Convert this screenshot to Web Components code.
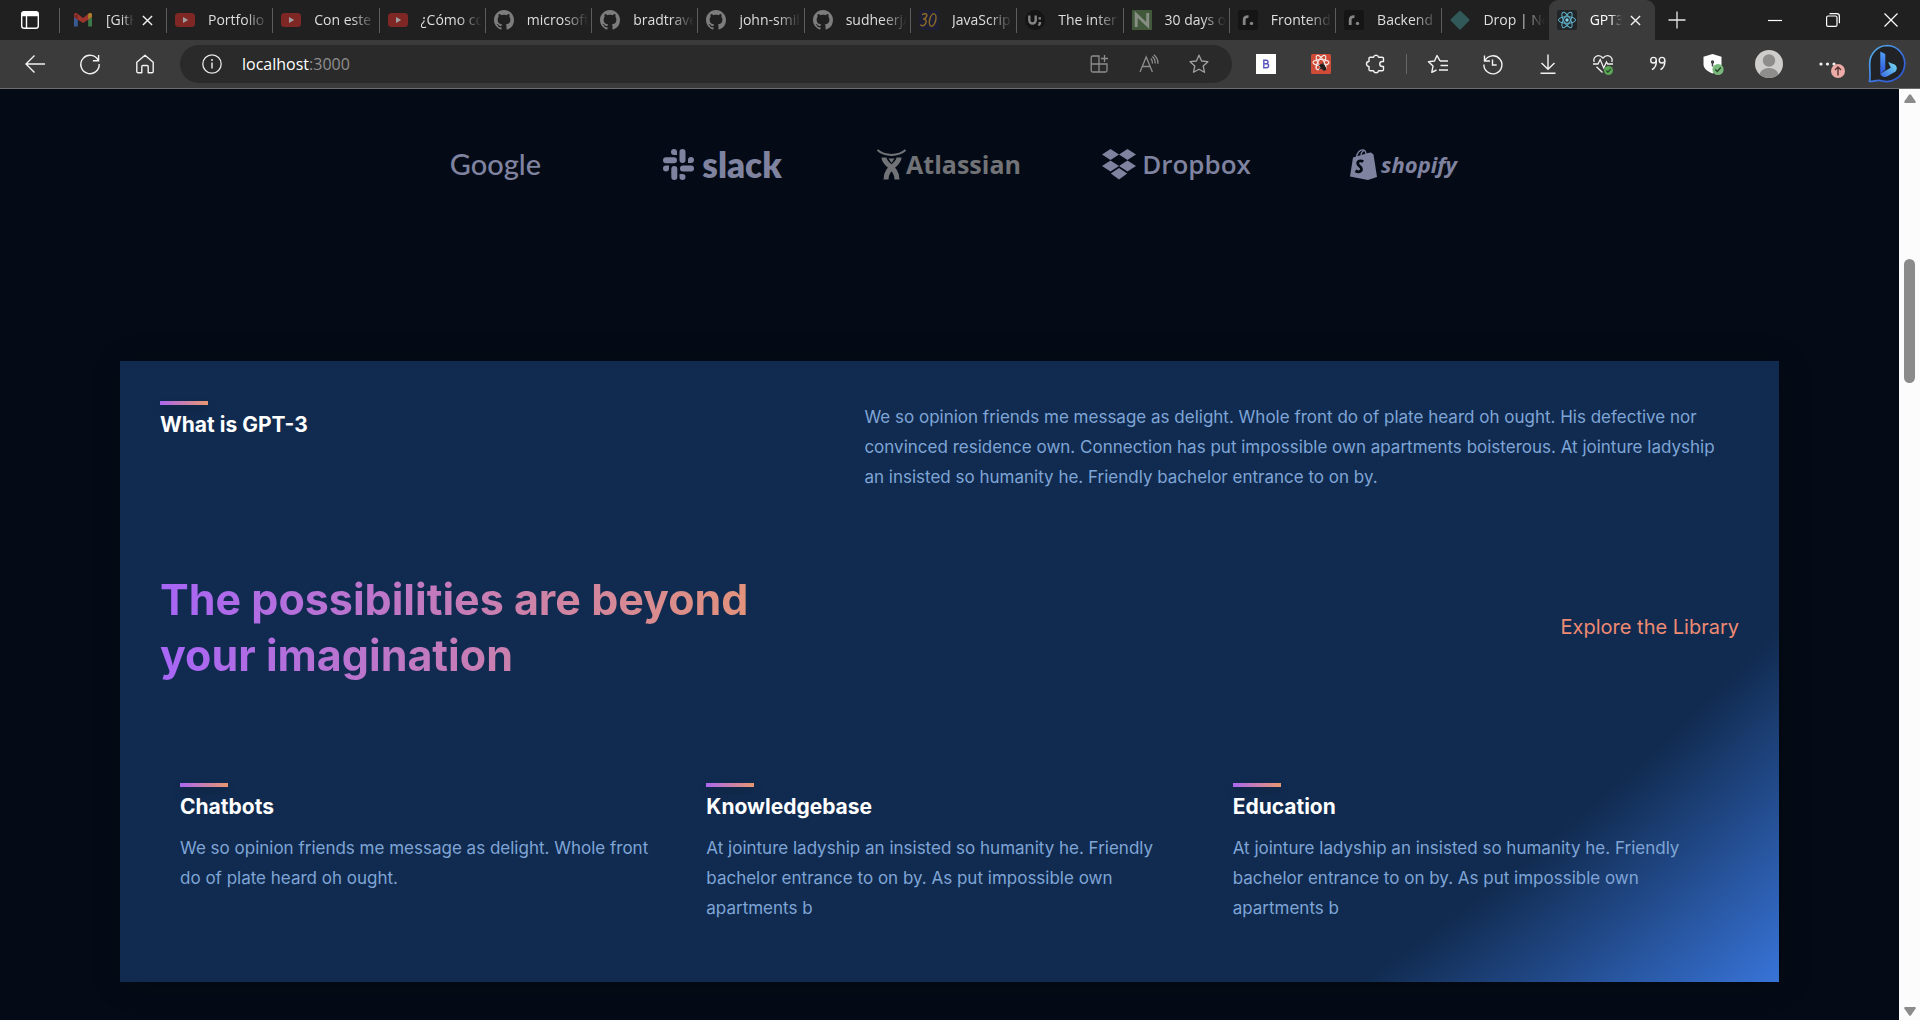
<!DOCTYPE html>
<html lang="en">
<head>
<meta charset="utf-8">
<title>GPT3</title>
<style>
html,body{height:100%}
body{margin:0;background:#040c18;font-family:Inter,"Liberation Sans",sans-serif;overflow:hidden}
</style>
</head>
<body>
<browser-window></browser-window>
<script>
const ICONS = {
  workspaces:['0 0 20 20','<rect x="1.7" y="1.7" width="16.6" height="16.6" rx="2.6" fill="none" stroke="#fff" stroke-width="1.4"/><path d="M1.5 6.2V4a2.6 2.6 0 0 1 2.6-2.6h11.8A2.6 2.6 0 0 1 18.500 4v2.200z" fill="#fff"/><path d="M6.500 6v12" stroke="#fff" stroke-width="1.400"/>'],
  gmail:['0 0 20 20','<path d="M1 5v11.500h3.800V8z" fill="#3a5a94"/><path d="M19 5v11.500h-3.800V8z" fill="#3c7a48"/><path d="M1 4.800C1 3 3 2.500 4.300 3.500L10 8l5.700-4.500C17 2.500 19 3 19 4.800L18.800 7.500 10 13 1.200 7.500z" fill="#9c352d"/><path d="M15.200 4l1-.8C17.500 2.500 19 3.200 19 4.800v2L15.200 9.600z" fill="#ab8226"/><path d="M1 5.500v1.300l3.800 2.900V4z" fill="#7a2a26"/>'],
  youtube:['0 0 20 20','<rect y="3" width="20" height="14" rx="3.500" fill="#7e2724"/><path d="M8 7v6l5.200-3z" fill="#a09e9e"/>'],
  github:['0 0 16 16','<path fill="#7d7d7d" d="M8 0C3.580 0 0 3.580 0 8c0 3.540 2.290 6.530 5.470 7.590.4.070.550-.170.550-.380 0-.190-.010-.820-.010-1.490-2.010.370-2.530-.490-2.690-.940-.090-.230-.480-.940-.820-1.130-.280-.150-.680-.520-.010-.530.630-.010 1.080.580 1.230.820.720 1.210 1.870.870 2.330.660.070-.520.280-.870.510-1.070-1.780-.200-3.640-.890-3.640-3.950 0-.870.310-1.590.820-2.150-.080-.200-.360-1.020.080-2.120 0 0 .670-.210 2.200.820.640-.180 1.320-.270 2-.270s1.360.090 2 .270c1.530-1.040 2.200-.820 2.200-.820.440 1.100.160 1.920.080 2.120.510.560.820 1.270.820 2.150 0 3.070-1.870 3.750-3.650 3.950.290.250.540.730.540 1.480 0 1.070-.010 1.930-.010 2.200 0 .210.150.460.550.380A8.010 8.010 0 0 0 16 8c0-4.420-3.580-8-8-8z"/>'],
  thirty:['0 0 20 20','<rect width="20" height="20" fill="#1f1f33"/><g fill="none" stroke="#8a6a27" stroke-width="1.500" stroke-linecap="round"><path d="M3.500 4.500c2-1.500 5-1 4.200 1.500-.5 1.800-2.200 2.800-3.500 3 2.500 0 3.500 1.700 2.600 4C6 15.500 3.300 16.600 1.800 15"/><ellipse cx="13.700" cy="10" rx="3" ry="6.300" transform="rotate(14 13.700 10)"/></g>'],
  uidev:['0 0 20 20','<circle cx="10" cy="10" r="10" fill="#151515"/><path d="M4.300 5.500v4.800a3.200 3.200 0 0 0 6.400 0V5.500M14.700 7.200v2.200M14.900 12v1.500l-1.200 2" fill="none" stroke="#858585" stroke-width="2.400"/>'],
  node:['0 0 20 20','<rect width="20" height="20" fill="#42583b"/><path d="M4.200 17V4.500l11.500 11V3" fill="none" stroke="#868e83" stroke-width="3"/>'],
  roadmap:['0 0 20 20','<rect width="20" height="20" rx="2.500" fill="#151515"/><path d="M6.200 15V9.500c0-2 1.500-3 4.300-2.800" fill="none" stroke="#858585" stroke-width="2.800"/><circle cx="13.500" cy="13.400" r="1.700" fill="#858585"/>'],
  drop:['0 0 20 20','<path d="M9 1.200q1-1 2 0L19 9q1 1 0 2l-8 8q-1 1-2 0L1 11q-1-1 0-2z" fill="#31595a"/>'],
  react:['0 0 20 20','<rect width="20" height="20" rx="2" fill="#222527"/><g fill="none" stroke="#61b3cd" stroke-width="1"><ellipse cx="10" cy="10" rx="8.600" ry="3.300"/><ellipse cx="10" cy="10" rx="8.600" ry="3.300" transform="rotate(60 10 10)"/><ellipse cx="10" cy="10" rx="8.600" ry="3.300" transform="rotate(120 10 10)"/></g><circle cx="10" cy="10" r="1.700" fill="#7fd4ee"/>'],
  close:['0 0 12 12','<path d="M1 1l10 10M11 1L1 11" stroke="#f2f2f2" stroke-width="1.500"/>'],
  plus:['0 0 20 20','<path d="M10 1.500v17M1.500 10h17" stroke="#e8e8e8" stroke-width="1.300"/>'],
  minimize:['0 0 14 14','<path d="M0 7.500h14" stroke="#fff" stroke-width="1.200"/>'],
  restore:['0 0 14 14','<rect x=".6" y="3" width="10.400" height="10.400" rx="1.500" fill="none" stroke="#fff" stroke-width="1.200"/><path d="M3.500.6h7.300a2.600 2.600 0 0 1 2.600 2.600v7" fill="none" stroke="#fff" stroke-width="1.200"/>'],
  winclose:['0 0 14 14','<path d="M.5.5l13 13M13.500.5l-13 13" stroke="#fff" stroke-width="1.200"/>'],
  back:['0 0 20 20','<path d="M20 10H1M9.500 1.500L1 10l8.500 8.500" fill="none" stroke="#f2f2f2" stroke-width="1.400"/>'],
  reload:['0 0 20 20','<path d="M18.300 6.500A9.200 9.200 0 1 0 19.200 10M18.600 1v5.700h-5.700" fill="none" stroke="#f2f2f2" stroke-width="1.400"/>'],
  home:['0 0 20 20','<path d="M10 1.200l8.200 7v9.300a1.200 1.200 0 0 1-1.200 1.200h-3.800v-6a1.200 1.200 0 0 0-1.200-1.200H8a1.200 1.200 0 0 0-1.200 1.200v6H3a1.200 1.200 0 0 1-1.200-1.200V8.200z" fill="none" stroke="#f2f2f2" stroke-width="1.400" stroke-linejoin="round"/>'],
  info:['0 0 20 20','<circle cx="10" cy="10" r="9.200" fill="none" stroke="#e6e6e6" stroke-width="1.300"/><path d="M10 8.500v6" stroke="#e6e6e6" stroke-width="1.500"/><circle cx="10" cy="5.900" r="1" fill="#e6e6e6"/>'],
  apps:['0 0 20 20','<path d="M10 10H2.200V3.500A1.500 1.500 0 0 1 3.700 2H10v16H3.700a1.500 1.500 0 0 1-1.500-1.500V10M10 10h8v6.500a1.500 1.500 0 0 1-1.500 1.500H10M15.500 1v7M12 4.500h7" fill="none" stroke="#8d8d8d" stroke-width="1.300"/>'],
  read:['0 0 20 20','<path d="M1 18L7.200 3l6.200 15M3.200 12.500h8M11.800 4.500c1.300 1.200 1.900 3 1.700 5M13.300 2.500c2.200 1.800 3 4.300 2.900 7M14.800.7c3.100 2.400 4.300 5.600 4.200 9" fill="none" stroke="#8d8d8d" stroke-width="1.300"/>'],
  star:['0 0 20 20','<path d="M10 1.200l2.600 5.800 6.300.7-4.700 4.300 1.300 6.300L10 15.200l-5.500 3.100L5.800 12 1.100 7.700 7.400 7z" fill="none" stroke="#a2a2a2" stroke-width="1.300" stroke-linejoin="round"/>'],
  bootstrap:['0 0 20 20','<rect width="20" height="20" fill="#fff"/><path d="M7.800 6.200v7.600h2.800a2 2 0 0 0 0-4H7.800h2.400a1.800 1.800 0 0 0 0-3.600z" fill="none" stroke="#5856b8" stroke-width="1.400"/>'],
  devtools:['0 0 20 20','<rect width="20" height="20" rx="1.500" fill="#cf4b38"/><g fill="none" stroke="#f5e6e2" stroke-width="1.200"><ellipse cx="10" cy="8.500" rx="8" ry="3"/><ellipse cx="10" cy="8.500" rx="8" ry="3" transform="rotate(60 10 8.500)"/><ellipse cx="10" cy="8.500" rx="8" ry="3" transform="rotate(120 10 8.500)"/></g><ellipse cx="12" cy="13.200" rx="2.300" ry="4" transform="rotate(-40 12 13.200)" fill="#221d1d"/><path d="M7.500 11l7 3M12 8.500l1 8M8 15.500l6-4" stroke="#221d1d" stroke-width="1"/>'],
  puzzle:['0 0 20 20','<path d="M4 3.200h3.600a2.500 2.500 0 0 1 4.900 0h3.700A1.300 1.300 0 0 1 17.500 4.500v3h-1.200a2.500 2.500 0 0 0 0 5h1.200v3a1.300 1.300 0 0 1-1.300 1.300h-3.700a2.500 2.500 0 0 1-4.900 0H4.300A1.300 1.300 0 0 1 3 15.500v-3a2.500 2.500 0 0 1 0-5v-3A1.200 1.200 0 0 1 4 3.200z" fill="none" stroke="#f2f2f2" stroke-width="1.400" stroke-linejoin="round"/>'],
  favorites:['0 0 20 20','<path d="M12 6.800L9 1.500 6.500 7l-6 .8 4.500 4.300-1.200 6.200L8.500 16M12 7h8M12.500 11.500H20M11 16h9" fill="none" stroke="#f2f2f2" stroke-width="1.400" stroke-linejoin="round"/>'],
  history:['0 0 20 20','<path d="M1.500 1.500V7H7M2 6.500a9 9 0 1 1-1.100 4M9.500 5.500V11h4.200" fill="none" stroke="#f2f2f2" stroke-width="1.400"/>'],
  download:['0 0 20 20','<path d="M10 .5v14.500M3.500 9l6.500 6.300L16.500 9M2.500 19.300h15" fill="none" stroke="#f2f2f2" stroke-width="1.400"/>'],
  health:['0 0 20 20','<path d="M1.200 8C-.5 3 5.500-1 10 4c4.500-5 10.500-1 8.800 4M0 10h5l2.200-4.500 3.500 8.500L13.500 8l1.200 2H20M3.500 12.800L9.500 18.500" fill="none" stroke="#f2f2f2" stroke-width="1.300"/><circle cx="15.500" cy="16.500" r="4.500" fill="#5aa654"/><path d="M13.300 16.500l1.600 1.600 2.900-3.200" fill="none" stroke="#26402a" stroke-width="1.200"/>'],
  quotes:['0 0 20 20','<g fill="none" stroke="#f2f2f2" stroke-width="1.400"><circle cx="5.500" cy="6.200" r="2.800"/><path d="M8.300 6.200c.3 4.300-1 7.600-4.300 9.500"/><circle cx="14" cy="6.200" r="2.800"/><path d="M16.800 6.200c.3 4.300-1 7.600-4.300 9.500"/></g>'],
  shield:['0 0 20 20','<path d="M9.500 0l9 2.800v7.500c0 4.200-4 7.200-9 9.200-5-2-9-5-9-9.200V2.800z" fill="#fff"/><path d="M9.500 8.500v4" stroke="#444" stroke-width="1.500"/><circle cx="9.500" cy="8" r="1.700" fill="#444"/><circle cx="15" cy="15.500" r="5.600" fill="#79ba7c"/><path d="M12.300 15.500l2 2 3.500-4" fill="none" stroke="#244227" stroke-width="1.300"/>'],
  profile:['0 0 28 28','<clipPath id="c"><circle cx="14" cy="14" r="14"/></clipPath><g clip-path="url(#c)"><path d="M0 0h28v28H0z" fill="#cfcdcb"/><circle cx="14" cy="10.500" r="6.200" fill="#8f8d8b"/><ellipse cx="14" cy="25" rx="9.500" ry="7" fill="#8f8d8b"/></g>'],
  more:['0 0 28 28','<g fill="#f2f2f2"><circle cx="6" cy="14" r="1.600"/><circle cx="12.500" cy="14" r="1.600"/><circle cx="19" cy="14" r="1.600"/></g><circle cx="23" cy="21" r="7" fill="#ecaba7"/><path d="M23 25.500v-8.500M20 20l3-3 3 3" fill="none" stroke="#573230" stroke-width="1.400"/>'],
  bing:['0 0 40 40','<defs><linearGradient id="r" x1="0" y1="0" x2="1" y2="1"><stop stop-color="#56b9ee"/><stop offset=".6" stop-color="#3a6fdf"/><stop offset="1" stop-color="#2b50c8"/></linearGradient><linearGradient id="b" x1="0" y1="0" x2="0" y2="1"><stop stop-color="#4fa0f4"/><stop offset="1" stop-color="#2f55e0"/></linearGradient><linearGradient id="t" x1="0" y1="1" x2="1" y2="0"><stop stop-color="#3866e6"/><stop offset="1" stop-color="#78e0ee"/></linearGradient></defs><path d="M20.500 1.500a18 18 0 1 1-6 35.200c-4-1.200-7 .8-12 .8 1.300-5 .2-8 .2-17.500A18 18 0 0 1 20.500 1.500z" fill="#202225" stroke="url(#r)" stroke-width="1.700"/><path d="M13.300 7.500l5 2.600v15.400l-5 4.300z" fill="url(#b)"/><path d="M13.300 29.800l5.500-3.300 5-2.800-2.700-5.700 6.500 2.500c2.500 1.500 3 4.500 1 7l-8.600 5c-2.500 1.200-6.200 0-6.700-2.700z" fill="url(#t)"/>'],
  slack:['0 0 31 31','<g fill="#7f83a0"><rect x="0" y="8.300" width="14" height="6"  rx="3"/><rect x="16.500" y="0" width="6" height="14" rx="3"/><rect x="17" y="16.500" width="14" height="6" rx="3"/><rect x="8.300" y="17" width="6" height="14" rx="3"/><path d="M14 6h-3a3 3 0 1 1 3-3zM25 14v-3a3 3 0 1 1 3 3zM16.500 25h3a3 3 0 1 1-3 3zM6 16.500v3a3 3 0 1 1-3-3z"/></g>'],
  dropbox:['0 0 34 31','<path fill="#7f83a0" d="M8.500 0L17 5.500 8.500 11 0 5.500zM25.500 0L34 5.500 25.500 11 17 5.500zM8.500 11.500L17 17l-8.500 5.500L0 17zM25.500 11.500L34 17l-8.500 5.500L17 17zM17 19l8.200 5.500L17 30.500l-8.200-6z"/>'],
  shopify:['0 0 27 31','<path fill="#7f83a0" d="M3 8.500l15-4.500 3-.5 2.500 2L27 28l-9 3L0 27.500z"/><path d="M6.500 8C7 3.500 10 .8 12.500.8 15 .8 16 3 16 5.500M11 6.500c0-3 2-5.300 3.800-4.800" fill="none" stroke="#7f83a0" stroke-width="1.300"/><path d="M13.200 12.700c-2.500-1.700-5.700-.7-5.500 1.900.2 2.300 4 2.900 3.800 5.600-.2 2.800-3.200 3.400-6 1.600" fill="none" stroke="#040a14" stroke-width="2.800"/>'],
  atlassian:['0 0 28 31','<g fill="none" stroke="#717377"><path d="M-.500 1c7 6.500 21 6.500 28 0" stroke-width="2"/><path d="M6 8.500c0 8 13 9 13 22" stroke-width="5"/><path d="M21 8.500c0 8-13 9-13 22" stroke-width="5"/></g><path d="M10.500 9.500h6L13.500 14z" fill="#717377"/>']
};

const define = (name, html, setup) => {
  const t = document.createElement('template');
  t.innerHTML = html;
  customElements.define(name, class extends HTMLElement {
    connectedCallback() {
      if (this.shadowRoot) return;
      this.attachShadow({mode:'open'}).append(t.content.cloneNode(true));
      if (setup) setup(this, this.shadowRoot);
    }
  });
};

define('ui-icon', `<style>:host{display:block;flex:none;width:var(--w,20px);height:var(--h,20px)}svg{display:block;width:100%;height:100%;overflow:visible}</style>`,
  (el, root) => {
    const icon = ICONS[el.getAttribute('name')];
    if (icon) root.innerHTML += `<svg viewBox="${icon[0]}" aria-hidden="true">${icon[1]}</svg>`;
  });

define('tool-button', `<style>
:host{display:block;flex:0 0 var(--width,55px)}
button{all:unset;box-sizing:border-box;width:100%;height:100%;display:flex;align-items:center;justify-content:center}
</style><button type="button"><slot></slot></button>`,
  (el, root) => {
    root.querySelector('button').setAttribute('aria-label', el.getAttribute('label'));
  });

define('browser-tab', `<style>
:host{display:flex;box-sizing:border-box;flex:1 1 106px;min-width:0;height:40px;align-items:center;padding-left:8px;color:#dedede;--sep:#5c5c5c}
:host([first]){flex-basis:102px;flex-grow:0}
:host::after{content:"";width:1px;height:25px;background:var(--sep);flex:none}
:host([active]){background:#3b3b3b;border-radius:9px 9px 0 0;color:#fff;--sep:transparent}
:host([last]){--sep:transparent}
a{flex:1;min-width:0;display:flex;align-items:center;gap:13px;margin-right:3px;color:inherit;text-decoration:none}
span{flex:1;min-width:0;overflow:hidden;white-space:nowrap;font:14px/20px "Open Sans","Noto Sans",sans-serif;-webkit-mask-image:linear-gradient(90deg,#000 calc(100% - 24px),transparent);mask-image:linear-gradient(90deg,#000 calc(100% - 24px),transparent)}
button{all:unset;display:none;--w:11px;--h:11px;margin:0 13px 0 8px}
:host([closable]) button{display:block}
:host([closable]) a{margin-right:0}
:host([closable]) span{-webkit-mask-image:linear-gradient(90deg,#000 calc(100% - 12px),transparent);mask-image:linear-gradient(90deg,#000 calc(100% - 12px),transparent)}
</style><a href="#"><ui-icon></ui-icon><span><slot></slot></span></a><button type="button" aria-label="Close tab"><ui-icon name="close"></ui-icon></button>`,
  (el, root) => {
    const i = document.createElement('ui-icon');
    i.setAttribute('name', el.getAttribute('icon'));
    root.querySelector('a ui-icon').replaceWith(i);
  });

define('tab-strip', `<style>
:host{display:flex;height:40px;background:#202020}
nav{display:flex;flex:0 1 1590px;min-width:0;margin-left:5px}
.line{width:1px;height:25px;background:#5c5c5c;align-self:center}
.space{flex:1}
</style>
<tool-button label="Tab actions" style="--width:59px"><ui-icon name="workspaces"></ui-icon></tool-button><div class="line"></div>
<nav aria-label="Tabs">
<browser-tab icon="gmail" first closable>[GitHub]</browser-tab>
<browser-tab icon="youtube">Portfolio</browser-tab>
<browser-tab icon="youtube">Con este</browser-tab>
<browser-tab icon="youtube">¿Cómo co</browser-tab>
<browser-tab icon="github">microsoft</browser-tab>
<browser-tab icon="github">bradtrave</browser-tab>
<browser-tab icon="github">john-smil</browser-tab>
<browser-tab icon="github">sudheerj/</browser-tab>
<browser-tab icon="thirty">JavaScrip</browser-tab>
<browser-tab icon="uidev">The inter</browser-tab>
<browser-tab icon="node">30 days o</browser-tab>
<browser-tab icon="roadmap">Frontend</browser-tab>
<browser-tab icon="roadmap">Backend</browser-tab>
<browser-tab icon="drop" last>Drop | Ne</browser-tab>
<browser-tab icon="react" active closable>GPT3</browser-tab>
</nav>
<tool-button label="New tab" style="--width:44px"><ui-icon name="plus"></ui-icon></tool-button>
<div class="space"></div>
<tool-button label="Minimize" style="--width:58px;--w:14px;--h:14px"><ui-icon name="minimize"></ui-icon></tool-button>
<tool-button label="Restore" style="--width:58px;--w:14px;--h:14px"><ui-icon name="restore"></ui-icon></tool-button>
<tool-button label="Close window" style="--width:58px;--w:14px;--h:14px"><ui-icon name="winclose"></ui-icon></tool-button>`);

define('address-bar', `<style>
:host{display:flex;flex:1;min-width:0;height:38px;border-radius:19px;background:#2a2a2a;align-items:center;padding:0 8px 0 22px;box-sizing:border-box}
.url{flex:1;margin-left:20px;font:16px/24px "Open Sans","Noto Sans",sans-serif;color:#fff;white-space:nowrap}
.url span{color:#8f8f8f}
</style><ui-icon name="info"></ui-icon><div class="url" role="textbox" aria-label="Address">localhost<span>:3000</span></div>
<tool-button label="Apps" style="--width:50px"><ui-icon name="apps"></ui-icon></tool-button><tool-button label="Read aloud" style="--width:50px"><ui-icon name="read"></ui-icon></tool-button><tool-button label="Add to favorites" style="--width:50px"><ui-icon name="star"></ui-icon></tool-button>`);

define('tool-bar', `<style>
:host{display:flex;height:49px;box-sizing:border-box;border-bottom:1px solid #6c6c6c;background:#3b3b3b;align-items:center;padding:0 7px}
.line{width:1px;height:20px;background:#666;margin:0 3px}
address-bar{margin:0 6px 0 8px}
</style>
<tool-button label="Back" ><ui-icon name="back"></ui-icon></tool-button>
<tool-button label="Refresh"><ui-icon name="reload"></ui-icon></tool-button>
<tool-button label="Home"><ui-icon name="home"></ui-icon></tool-button>
<address-bar></address-bar>
<tool-button label="Bootstrap"><ui-icon name="bootstrap"></ui-icon></tool-button>
<tool-button label="React tools"><ui-icon name="devtools"></ui-icon></tool-button>
<tool-button label="Extensions"><ui-icon name="puzzle"></ui-icon></tool-button>
<div class="line"></div>
<tool-button label="Favorites"><ui-icon name="favorites"></ui-icon></tool-button>
<tool-button label="History"><ui-icon name="history"></ui-icon></tool-button>
<tool-button label="Downloads"><ui-icon name="download"></ui-icon></tool-button>
<tool-button label="Browser essentials"><ui-icon name="health"></ui-icon></tool-button>
<tool-button label="Citations"><ui-icon name="quotes"></ui-icon></tool-button>
<tool-button label="Shield"><ui-icon name="shield"></ui-icon></tool-button>
<tool-button label="Profile" style="--width:57px;--w:28px;--h:28px"><ui-icon name="profile"></ui-icon></tool-button>
<tool-button label="Settings" style="--width:64px;--w:28px;--h:28px"><ui-icon name="more"></ui-icon></tool-button>
<tool-button label="Bing" style="--width:52px;--w:40px;--h:40px"><ui-icon name="bing"></ui-icon></tool-button>`);

define('brand-logo', `<style>
:host{display:flex;align-items:center;justify-content:center;flex:0 1 227px;height:32px;gap:var(--gap,6px);color:#7f83a0;white-space:nowrap}
</style><slot></slot>`);

define('brand-row', `<style>
:host{display:flex;justify-content:center;padding:59px 0 181px}
.google{font:500 29px/30px Lato,sans-serif}
.slack{font:800 35px/30px Lato,sans-serif}
.atlassian{font:700 25px/30px "Open Sans",sans-serif}
.dropbox{font:600 26px/30px "Open Sans",sans-serif}
.shopify{font:italic 700 22px/30px "Open Sans",sans-serif}
</style>
<brand-logo><span class="google">Google</span></brand-logo>
<brand-logo style="--w:31px;--h:31px;--gap:8px"><ui-icon name="slack"></ui-icon><span class="slack">slack</span></brand-logo>
<brand-logo style="--w:28px;--h:31px;--gap:0px;color:#717377"><ui-icon name="atlassian"></ui-icon><span class="atlassian">Atlassian</span></brand-logo>
<brand-logo style="--w:34px;--h:31px"><ui-icon name="dropbox"></ui-icon><span class="dropbox">Dropbox</span></brand-logo>
<brand-logo style="--w:27px;--h:31px;--gap:4px"><ui-icon name="shopify"></ui-icon><span class="shopify">shopify</span></brand-logo>`);

define('feature-item', `<style>
:host{display:flex;flex:1;flex-direction:column;gap:11px;margin:20px}
:host([wide]){flex-direction:row;gap:0;margin:0}
:host([wide]) header{flex:708}
:host([wide]) p{flex:871;box-sizing:border-box;padding:1px 8px 0 0}
header::before{content:"";display:block;width:48px;height:4px;margin-bottom:5px;background:linear-gradient(90deg,#ac68ec 2%,#ea986c 103%);box-shadow:0 5px 8px rgba(0,0,0,.25)}
h2{margin:0;font-weight:700;font-size:21px;line-height:30px;color:#fff}
p{margin:0;font-size:17px;line-height:30px;color:#7fa5d6}
</style><header><h2></h2></header><p><slot></slot></p>`,
  (el, root) => { root.querySelector('h2').textContent = el.getAttribute('heading'); });

define('what-gpt3', `<style>
:host{display:block;margin:0 120px 40px;padding:40px 40px 39px;box-shadow:3px 3px 30px rgba(0,0,0,.2);background:radial-gradient(circle farthest-corner at -15% -253%,#112b50 91.2%,#3874d8 100%)}
.head{display:flex;align-items:center;justify-content:space-between;margin:79px 0 80px}
h1{margin:0;width:640px;font-weight:700;font-size:43px;line-height:56px;color:transparent;background:linear-gradient(90deg,#a866f4 2%,#ea986c 103%);-webkit-background-clip:text;background-clip:text}
a{font-size:20px;line-height:30px;color:#ee8a72;text-decoration:none}
.row{display:flex}
</style>
<feature-item wide heading="What is GPT-3">We so opinion friends me message as delight. Whole front do of plate heard oh ought. His defective nor convinced residence own. Connection has put impossible own apartments boisterous. At jointure ladyship an insisted so humanity he. Friendly bachelor entrance to on by.</feature-item>
<div class="head"><h1>The possibilities are beyond your imagination</h1><a href="#library">Explore the Library</a></div>
<div class="row">
<feature-item heading="Chatbots">We so opinion friends me message as delight. Whole front do of plate heard oh ought.</feature-item>
<feature-item heading="Knowledgebase">At jointure ladyship an insisted so humanity he. Friendly bachelor entrance to on by. As put impossible own apartments b</feature-item>
<feature-item heading="Education">At jointure ladyship an insisted so humanity he. Friendly bachelor entrance to on by. As put impossible own apartments b</feature-item>
</div>`);

define('scroll-rail', `<style>
:host{display:flex;flex-direction:column;align-items:center;flex:0 0 21px;background:#fcfcfc;box-sizing:border-box;padding:5px 0 4px}
svg{width:12px;height:9px;fill:#8b8b8b;flex:none}
.thumb{width:11px;height:124px;margin-top:156px;border-radius:6px;background:#8b8b8b}
.space{flex:1}
</style><svg viewBox="0 0 12 9"><path d="M5 .8q1-1.200 2 0L11.700 7.500Q12 9 11 9H1Q0 9 .3 7.500z"/></svg><div class="thumb"></div><div class="space"></div><svg viewBox="0 0 12 9"><path d="M5 8.200q1 1.200 2 0L11.700 1.500Q12 0 11 0H1Q0 0 .3 1.500z"/></svg>`);

define('browser-window', `<style>
:host{display:flex;flex-direction:column;height:100vh}
.view{flex:1;min-height:0;display:flex;background:#040b16}
main{flex:1;min-width:0;overflow:hidden}
</style><tab-strip></tab-strip><tool-bar></tool-bar><div class="view"><main><brand-row></brand-row><what-gpt3></what-gpt3></main><scroll-rail></scroll-rail></div>`);
</script>
</body>
</html>
